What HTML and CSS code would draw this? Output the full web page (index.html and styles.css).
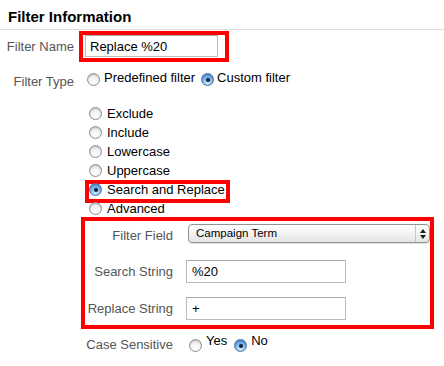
FILE: index.html
```html
<!DOCTYPE html>
<html lang="en">
<head>
    <meta charset="UTF-8">
    <meta name="viewport" content="width=device-width, initial-scale=1.0">
    <title>Filter Information</title>
    <link rel="stylesheet" href="styles.css">
</head>
<body>
    <h2 class="section-title">Filter Information</h2>

    <div class="name-row">
        <label class="field-label name-label" for="filterName">Filter Name</label>
        <div class="callout callout-name">
            <input class="text-input name-input" id="filterName" type="text" value="Replace %20" readonly>
        </div>
    </div>

    <div class="choice-row type-row">
        <span class="field-label type-label">Filter Type</span>
        <div class="choices">
            <span class="choice"><span class="radio"></span>Predefined filter</span>
            <span class="choice choice-next"><span class="radio checked"></span>Custom filter</span>
        </div>
    </div>

    <ul class="type-list">
        <li><span class="radio"></span>Exclude</li>
        <li><span class="radio"></span>Include</li>
        <li><span class="radio"></span>Lowercase</li>
        <li><span class="radio"></span>Uppercase</li>
        <li>
            <span class="callout callout-inline">
                <span class="callout-body"><span class="radio checked"></span>Search and Replace</span>
            </span>
        </li>
        <li><span class="radio"></span>Advanced</li>
    </ul>

    <div class="callout callout-fields">
        <div class="field-row select-row">
            <span class="field-label">Filter Field</span>
            <div class="select">
                <span class="select-value">Campaign Term</span>
                <span class="select-arrows"><span class="arrow-up"></span><span class="arrow-down"></span></span>
            </div>
        </div>
        <div class="field-row search-row">
            <label class="field-label" for="searchString">Search String</label>
            <input class="text-input field-input" id="searchString" type="text" value="%20" readonly>
        </div>
        <div class="field-row replace-row">
            <label class="field-label" for="replaceString">Replace String</label>
            <input class="text-input field-input" id="replaceString" type="text" value="+" readonly>
        </div>
    </div>

    <div class="choice-row case-row">
        <span class="field-label case-label">Case Sensitive</span>
        <div class="choices">
            <span class="choice"><span class="radio"></span>Yes</span>
            <span class="choice choice-next"><span class="radio checked"></span>No</span>
        </div>
    </div>
</body>
</html>
```

FILE: styles.css
```css
body {
    font-family: "Liberation Sans", Arial, sans-serif;
    font-size: 13px;
    margin: 0;
    background-color: #fff;
    color: #000;
}
.section-title {
    margin: 0;
    padding: 8px 8px 4px;
    font-size: 15px;
    line-height: 17px;
    font-weight: bold;
    border-bottom: 1px solid #dcdcdc;
}
.field-label {
    color: #555;
    text-align: right;
    box-sizing: border-box;
}
.callout {
    border: 4px solid #f00;
}
.text-input {
    display: block;
    box-sizing: border-box;
    height: 22px;
    margin: 0;
    padding: 0 4px;
    border: 1px solid #bdbdbd;
    border-top-color: #a9a9a9;
    font-family: "Liberation Sans", Arial, sans-serif;
    font-size: 13px;
    color: #000;
    background: #fff;
    outline: none;
}

/* filter name */
.name-row {
    display: flex;
    align-items: center;
    margin-top: 1px;
}
.name-label {
    width: 79px;
    padding-right: 5px;
}
.callout-name {
    padding: 0 7px 1px 2px;
}
.name-input {
    width: 133px;
}

/* radio rows */
.choice-row {
    display: flex;
    align-items: flex-start;
    height: 18px;
}
.choice-row .field-label {
    line-height: 18px;
    padding-top: 2px;
}
.choices {
    display: flex;
    margin-top: -2px;
}
.choice {
    display: flex;
    align-items: flex-start;
    line-height: 18px;
}
.choice .radio {
    margin-right: 4px;
}
.type-row {
    margin-top: 9px;
}
.type-label {
    width: 87px;
    padding-right: 13px;
}
.type-row .radio {
    margin-top: 4px;
}
.type-row .choice-next {
    margin-left: 6px;
}
.type-row .choice-next .radio {
    margin-right: 3px;
}
.case-row {
    margin-top: 5px;
}
.case-label {
    width: 189px;
    padding-right: 16px;
}
.case-row .radio {
    margin-top: 7px;
}
.case-row .choice-next {
    margin-left: 7px;
}

/* radio buttons */
.radio {
    position: relative;
    flex: none;
    width: 13px;
    height: 13px;
    box-sizing: border-box;
    border-radius: 50%;
    border: 1px solid #8d8d8d;
    background: radial-gradient(circle at 50% 75%, #ffffff 0%, #f4f4f4 45%, #cfcfcf 100%);
    box-shadow: inset 0 1px 1px rgba(0, 0, 0, 0.12);
}
.radio.checked {
    border-color: #4d6f9c;
    background: radial-gradient(circle at 50% 80%, #d4ecff 0%, #7fb8ee 45%, #3f7fcf 100%);
}
.radio.checked::after {
    content: "";
    position: absolute;
    left: 3.5px;
    top: 3.5px;
    width: 4px;
    height: 4px;
    border-radius: 50%;
    background: #15202e;
}

/* filter types */
.type-list {
    list-style: none;
    margin: 15px 0 0 89px;
    padding: 0;
}
.type-list li {
    display: flex;
    align-items: flex-start;
    height: 19px;
    line-height: 19px;
}
.type-list .radio {
    margin-top: 3px;
    margin-right: 5px;
}
.callout-inline {
    display: flex;
    height: 15px;
    margin-left: -4px;
    padding-right: 1px;
}
.callout-body {
    display: flex;
    align-items: flex-start;
    margin-top: -4px;
}

/* search and replace fields */
.callout-fields {
    width: 353px;
    box-sizing: border-box;
    margin: -1px 0 0 81px;
    padding: 3px 0 5px;
}
.field-row {
    display: flex;
    align-items: flex-start;
}
.field-row .field-label {
    width: 101px;
    padding-right: 13px;
    line-height: 23px;
}
.select-row .field-label {
    line-height: 19px;
    padding-top: 2px;
}
.search-row {
    margin-top: 15px;
}
.replace-row {
    margin-top: 14px;
}
.field-input {
    width: 160px;
    height: 23px;
    padding: 0 5px;
}
.select {
    display: flex;
    align-items: stretch;
    justify-content: space-between;
    box-sizing: border-box;
    width: 242px;
    height: 19px;
    margin-left: 2px;
    border: 1px solid #939393;
    border-radius: 4px;
    background: linear-gradient(#ffffff 0%, #f3f3f3 50%, #e4e4e4 100%);
    box-shadow: 0 1px 1px rgba(0, 0, 0, 0.12);
}
.select-value {
    padding-left: 7px;
    font-size: 11.5px;
    line-height: 16px;
}
.select-arrows {
    display: flex;
    flex-direction: column;
    align-items: center;
    justify-content: center;
    gap: 2px;
    width: 13px;
    border-left: 1px solid #c6c6c6;
}
.arrow-up, .arrow-down {
    width: 0;
    height: 0;
    border-left: 3px solid transparent;
    border-right: 3px solid transparent;
}
.arrow-up {
    border-bottom: 4px solid #1e1e1e;
}
.arrow-down {
    border-top: 4px solid #1e1e1e;
}
```
